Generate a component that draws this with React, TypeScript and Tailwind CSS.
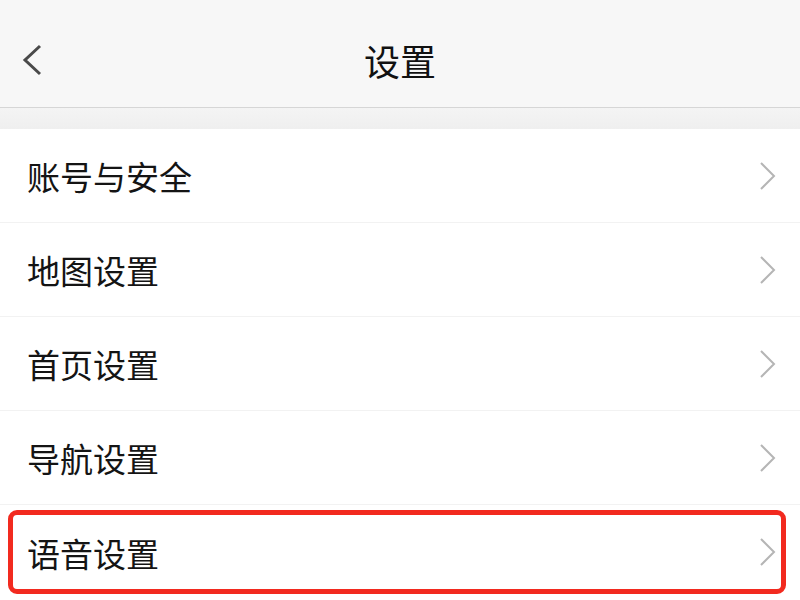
const items = ["账号与安全", "地图设置", "首页设置", "导航设置", "语音设置"];

const font = { fontFamily: '"Noto Sans CJK SC", "Noto Sans", sans-serif' };

const Chevron = () => (
  <svg width="18" height="30" viewBox="0 0 18 30" fill="none">
    <path d="M2 2 L15 15 L2 28" stroke="#b5b5b5" strokeWidth="2" strokeLinejoin="miter" />
  </svg>
);

const App = () => {
  return (
    <div className="w-[800px] h-[600px] overflow-hidden bg-white" style={font}>
      <div className="relative h-[108px] bg-[#f7f7f7] border-b border-[#d6d6d6] flex items-center justify-center">
        <svg className="absolute left-[20px] top-[44px]" width="26" height="32" viewBox="0 0 26 32" fill="none">
          <path d="M20 2 L5 16 L20 30" stroke="#4a4a4a" strokeWidth="3" />
        </svg>
        <h1 className="text-[36px] text-[#111] leading-none mt-[12px]">设置</h1>
      </div>
      <div className="h-[21px] bg-gradient-to-b from-[#f4f4f4] to-[#efefef]" />
      <div className="relative">
        {items.map((item, i) => (
          <div
            key={item}
            className={`h-[94px] flex items-center justify-between pl-[27px] pr-[23px] ${
              i < items.length - 1 ? "border-b border-[#f2f2f2]" : ""
            }`}
          >
            <span className="text-[33px] text-[#141414] leading-none mt-[2px]">{item}</span>
            <Chevron />
          </div>
        ))}
        <div className="absolute left-[8px] w-[778px] top-[381px] h-[84px] border-[5px] border-[#f22a1f] rounded-[9px] pointer-events-none" />
      </div>
    </div>
  );
};

export default App;
